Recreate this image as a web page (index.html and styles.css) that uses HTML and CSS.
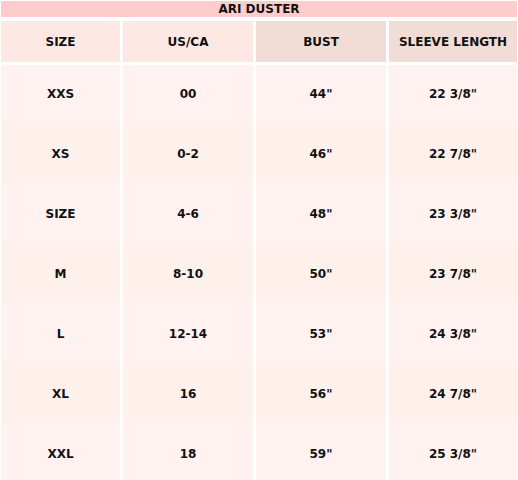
FILE: index.html
```html
<!DOCTYPE html>
<html>
<head>
<meta charset="utf-8">
<link rel="stylesheet" href="styles.css">
</head>
<body>
<div class="chart">
  <div class="title">ARI DUSTER</div>
  <div class="row head">
    <div class="cell h1">SIZE</div>
    <div class="cell h1">US/CA</div>
    <div class="cell h2">BUST</div>
    <div class="cell h2">SLEEVE LENGTH</div>
  </div>
  <div class="row data pink first">
    <div class="cell">XXS</div><div class="cell">00</div><div class="cell">44"</div><div class="cell">22 3/8"</div>
  </div>
  <div class="row data peach">
    <div class="cell">XS</div><div class="cell">0-2</div><div class="cell">46"</div><div class="cell">22 7/8"</div>
  </div>
  <div class="row data pink">
    <div class="cell">SIZE</div><div class="cell">4-6</div><div class="cell">48"</div><div class="cell">23 3/8"</div>
  </div>
  <div class="row data peach">
    <div class="cell">M</div><div class="cell">8-10</div><div class="cell">50"</div><div class="cell">23 7/8"</div>
  </div>
  <div class="row data pink">
    <div class="cell">L</div><div class="cell">12-14</div><div class="cell">53"</div><div class="cell">24 3/8"</div>
  </div>
  <div class="row data peach">
    <div class="cell">XL</div><div class="cell">16</div><div class="cell">56"</div><div class="cell">24 7/8"</div>
  </div>
  <div class="row data pink">
    <div class="cell">XXL</div><div class="cell">18</div><div class="cell">59"</div><div class="cell">25 3/8"</div>
  </div>
</div>
</body>
</html>
```
FILE: styles.css
```css
html, body {
  margin: 0;
  padding: 0;
  background: #ffffff;
}
body {
  font-family: "DejaVu Sans", Verdana, sans-serif;
  font-weight: bold;
  font-size: 12px;
  color: #111111;
  overflow: hidden;
}
.chart {
  padding: 1px 0 0 1px;
  width: 516px;
}
.title {
  height: 16px;
  line-height: 16px;
  background: #ffcccc;
  text-align: center;
  margin-bottom: 4px;
}
.row {
  display: grid;
  grid-template-columns: 119px 130px 130px 128px;
  column-gap: 3px;
}
.cell {
  display: flex;
  align-items: center;
  justify-content: center;
}
.head {
  height: 41px;
  margin-bottom: 3px;
}
.h1 { background: #fde8e4; }
.h2 { background: #f2ddd6; }
.data { height: 60px; }
.data .cell { padding-top: 4px; }
.data.first { height: 57px; }
.data.first .cell { padding-top: 1px; }
.pink .cell { background: #fff2f1; }
.peach .cell { background: #fef0eb; }
```
